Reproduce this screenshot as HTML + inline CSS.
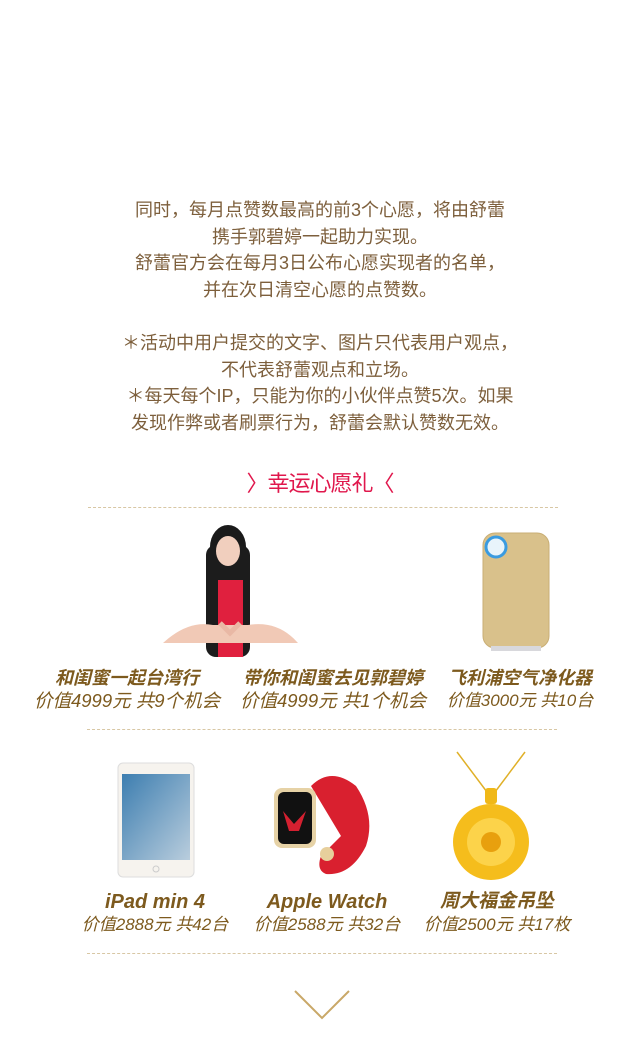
<!DOCTYPE html>
<html><head><meta charset="utf-8"><style>
body{margin:0;width:640px;height:1039px;background:#fff;position:relative;overflow:hidden;font-family:"Liberation Sans","Noto Sans CJK SC",sans-serif}
.t{position:absolute;left:0;width:640px;text-align:center;color:#7d5f3c;font-size:18px;line-height:26.7px}
.dash{position:absolute;height:0;border-top:1px dashed #d8c7a4}
.it{position:absolute;text-align:center;font-style:italic;color:#7d5a1e;white-space:nowrap}
.it b{display:block;font-size:18px;line-height:24px}
.it span{display:block;font-size:16px;line-height:22px;font-style:italic}
.abs{position:absolute}
</style></head><body>
<div class="t" style="top:197px">同时，每月点赞数最高的前3个心愿，将由舒蕾<br>携手郭碧婷一起助力实现。<br>舒蕾官方会在每月3日公布心愿实现者的名单，<br>并在次日清空心愿的点赞数。</div>
<div class="t" style="top:330px">＊活动中用户提交的文字、图片只代表用户观点，<br>不代表舒蕾观点和立场。<br>＊每天每个IP，只能为你的小伙伴点赞5次。如果<br>发现作弊或者刷票行为，舒蕾会默认赞数无效。</div>
<div class="abs" style="top:469px;left:0;width:640px;text-align:center;color:#e0174c;font-size:22px;line-height:30px;letter-spacing:-1px">〉幸运心愿礼〈</div>
<div class="dash" style="top:507px;left:88px;width:470px"></div>
<svg class="abs" style="left:158px;top:525px" width="145" height="132">
<ellipse cx="70" cy="22" rx="18" ry="22" fill="#1a1a1a"/>
<rect x="48" y="20" width="44" height="112" rx="10" fill="#1c1c1c"/>
<ellipse cx="70" cy="26" rx="12" ry="15" fill="#f1cfbe"/>
<rect x="60" y="55" width="25" height="77" fill="#e0203e"/>
<path d="M5 118 Q30 95 55 100 L90 100 Q120 95 140 118 Z" fill="#f1c9b6"/>
<path d="M62 98 L72 108 L82 98" stroke="#e9b8a5" stroke-width="5" fill="none"/>
</svg>
<svg class="abs" style="left:481px;top:532px" width="70" height="122">
<rect x="2" y="1" width="66" height="115" rx="12" fill="#d9c18b"/>
<rect x="2" y="1" width="66" height="115" rx="12" fill="none" stroke="#c9ae74"/>
<circle cx="15" cy="15" r="10" fill="#e8f4fb" stroke="#3a9be0" stroke-width="3"/>
<rect x="10" y="114" width="50" height="5" fill="#d8d8dc"/>
</svg>
<div class="it" style="left:20px;top:666px;width:214px"><b>和闺蜜一起台湾行</b><span style="font-size:18.5px">价值4999元 共9个机会</span></div>
<div class="it" style="left:226px;top:666px;width:214px"><b>带你和闺蜜去见郭碧婷</b><span style="font-size:18.5px">价值4999元 共1个机会</span></div>
<div class="it" style="left:440px;top:666px;width:160px"><b>飞利浦空气净化器</b><span style="font-size:17px">价值3000元 共10台</span></div>
<div class="dash" style="top:729px;left:87px;width:470px"></div>
<svg class="abs" style="left:117px;top:762px" width="78" height="118">
<defs><linearGradient id="g" x1="0" y1="0" x2="1" y2="1"><stop offset="0" stop-color="#3d7eb0"/><stop offset="1" stop-color="#b9cddd"/></linearGradient></defs>
<rect x="1" y="1" width="76" height="114" rx="5" fill="#f6f3ee" stroke="#ddd"/>
<rect x="5" y="12" width="68" height="86" fill="url(#g)"/>
<circle cx="39" cy="107" r="3" fill="none" stroke="#ccc"/>
</svg>
<svg class="abs" style="left:271px;top:766px" width="104" height="114">
<path d="M40 20 Q60 0 85 20 Q105 50 95 80 Q80 110 55 108 Q45 104 50 90 L70 70 Z" fill="#d9202f"/>
<rect x="3" y="22" width="42" height="60" rx="8" fill="#e6d2a6"/>
<rect x="7" y="26" width="34" height="52" rx="6" fill="#111"/>
<path d="M12 45 L23 58 L35 45 L28 65 L18 65 Z" fill="#d42030"/>
<circle cx="56" cy="88" r="7" fill="#e7cf9c"/>
</svg>
<svg class="abs" style="left:445px;top:750px" width="92" height="138">
<path d="M12 2 L42 42 M80 2 L50 42" stroke="#e0b028" stroke-width="1.5"/>
<rect x="40" y="38" width="12" height="16" rx="3" fill="#f0b818"/>
<circle cx="46" cy="92" r="38" fill="#f5bd1c"/>
<circle cx="46" cy="92" r="24" fill="#fcd34a"/>
<circle cx="46" cy="92" r="10" fill="#e8a00e"/>
</svg>
<div class="it" style="left:58px;top:890px;width:194px"><b style="font-size:20px">iPad min 4</b><span style="font-size:17px">价值2888元 共42台</span></div>
<div class="it" style="left:230px;top:890px;width:194px"><b style="font-size:20px">Apple Watch</b><span style="font-size:17px">价值2588元 共32台</span></div>
<div class="it" style="left:400px;top:890px;width:194px"><b style="font-size:19px">周大福金吊坠</b><span style="font-size:17px">价值2500元 共17枚</span></div>
<div class="dash" style="top:953px;left:87px;width:470px"></div>
<svg class="abs" style="left:292px;top:988px" width="60" height="34"><path d="M3 3 L30 30 L57 3" stroke="#c9a868" stroke-width="2" fill="none"/></svg>
</body></html>
